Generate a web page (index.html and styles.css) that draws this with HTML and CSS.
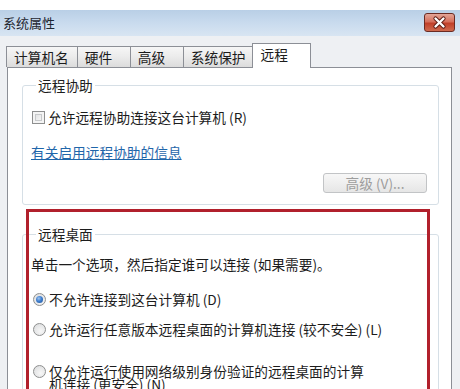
FILE: index.html
```html
<!DOCTYPE html>
<html lang="zh-CN">
<head>
<meta charset="utf-8">
<title>系统属性</title>
<link rel="stylesheet" href="styles.css">
</head>
<body>
<div class="window">
  <div class="topstrip"></div>
  <div class="titlebar">
    <span class="title">系统属性</span>
    <div class="close">
      <svg width="31" height="19" viewBox="0 0 31 19">
        <path d="M11.5 5.5 L19.5 13.5 M19.5 5.5 L11.5 13.5" stroke="#5a1a12" stroke-width="4.2" stroke-linecap="round"/>
        <path d="M11.5 5.5 L19.5 13.5 M19.5 5.5 L11.5 13.5" stroke="#ffffff" stroke-width="2.4" stroke-linecap="round"/>
      </svg>
    </div>
  </div>
  <div class="dialog">
    <div class="tabs">
      <div class="tab">计算机名</div>
      <div class="tab">硬件</div>
      <div class="tab">高级</div>
      <div class="tab">系统保护</div>
      <div class="tab active">远程</div>
    </div>
    <div class="panel">
      <fieldset class="group group-assist">
        <legend>远程协助</legend>
        <div class="option">
          <span class="checkbox"></span>
          <span class="option-text">允许远程协助连接这台计算机 (R)</span>
        </div>
        <a class="link">有关启用远程协助的信息</a>
        <div class="button-row"><span class="button">高级 (V)...</span></div>
      </fieldset>
      <fieldset class="group group-desktop">
        <legend>远程桌面</legend>
        <p class="desc">单击一个选项，然后指定谁可以连接 (如果需要)。</p>
        <div class="option radio-option first">
          <span class="radio checked"></span>
          <span class="option-text">不允许连接到这台计算机 (D)</span>
        </div>
        <div class="option radio-option">
          <span class="radio"></span>
          <span class="option-text">允许运行任意版本远程桌面的计算机连接 (较不安全) (L)</span>
        </div>
        <div class="option radio-option multi">
          <span class="radio"></span>
          <span class="option-text">仅允许运行使用网络级别身份验证的远程桌面的计算机连接 (更安全) (N)</span>
        </div>
      </fieldset>
    </div>
  </div>
  <div class="annotation"></div>
</div>
</body>
</html>
```
FILE: styles.css
```css
* { box-sizing: border-box; }
html, body { margin: 0; padding: 0; }
body {
  width: 460px;
  height: 389px;
  overflow: hidden;
  background: #eef0f3;
  font-family: "Noto Sans CJK SC", "Noto Sans", sans-serif;
  font-size: 13.7px;
  color: #1c1c1c;
}
.window {
  position: relative;
  width: 460px;
  height: 389px;
  overflow: hidden;
}
.topstrip {
  height: 10px;
  background: #ffffff;
}
.titlebar {
  height: 26px;
  background: linear-gradient(to bottom, #b9cfe6 0%, #c9dbee 50%, #d8e5f2 100%);
  display: flex;
  justify-content: space-between;
  align-items: flex-start;
  padding: 0 5px 0 3px;
}
.title {
  font-size: 13px;
  line-height: 26px;
  color: #1e2630;
}
.close {
  margin-top: 3px;
  width: 31px;
  height: 19px;
  border: 1px solid #6b2b23;
  border-radius: 3px;
  background: linear-gradient(to bottom, #e3a597 0%, #d6705d 45%, #c1402a 55%, #cf6a4f 100%);
  display: flex;
  align-items: center;
  justify-content: center;
  overflow: hidden;
}
.close svg { display: block; margin: -1px; }
.dialog {
  background: #eef0f3;
}
.tabs {
  display: flex;
  align-items: flex-end;
  padding: 7px 0 0 6px;
  height: 31px;
}
.tab {
  height: 21px;
  min-width: 54px;
  padding: 0 8px 0 7px;
  line-height: 20px;
  font-size: 13.7px;
  border: 1px solid #8c8f96;
  border-bottom: none;
  margin-right: -1px;
  background: linear-gradient(to bottom, #f6f6f6 0%, #ebebeb 50%, #dcdcdc 100%);
  color: #1c1c1c;
}
.tab.active {
  height: 25px;
  width: 59px;
  margin-left: -2px;
  margin-bottom: -1px;
  padding-left: 8px;
  background: #ffffff;
  position: relative;
  z-index: 1;
  line-height: 20px;
}
.panel {
  margin: 0 8px 0 7px;
  height: 340px;
  border: 1px solid #8c8f96;
  background: #ffffff;
  padding: 8px 12px 0 14px;
}
.group {
  margin: 0;
  border: 1px solid #d6dfe6;
  border-radius: 3px;
  padding: 0 11px 11px 8px;
  min-inline-size: 0;
  display: flex;
  flex-direction: column;
  align-items: flex-start;
}
.group legend {
  margin-left: 5px;
  padding: 0 2px;
  line-height: 18px;
  font-size: 13.7px;
  color: #1c1c1c;
}
.group-desktop {
  margin-top: 20px;
  padding-bottom: 40px;
}
.option {
  display: flex;
  align-items: flex-start;
  line-height: 18px;
  margin-top: 14px;
}
.checkbox {
  width: 13px;
  height: 13px;
  margin: 3px 3px 0 1px;
  border: 1px solid #8e8f8f;
  background: linear-gradient(135deg, #d9dadb 0%, #f0f0f0 60%, #fbfbfb 100%);
  box-shadow: inset 0 0 0 2px #f4f4f4, inset 0 0 0 3px #c7c9cb;
  flex: none;
}
.link {
  margin-top: 17px;
  line-height: 18px;
  color: #1f66aa;
  text-decoration: underline;
  cursor: pointer;
}
.button-row {
  align-self: stretch;
  display: flex;
  justify-content: flex-end;
  margin-top: 12px;
}
.button {
  width: 104px;
  height: 20px;
  border: 1px solid #c2c4c6;
  border-radius: 3px;
  background: linear-gradient(to bottom, #f7f7f7 0%, #efefef 50%, #e6e6e6 100%);
  color: #9d9d9d;
  text-align: center;
  line-height: 18px;
  font-size: 13.7px;
}
.desc {
  margin: 12px 0 0 0;
  line-height: 18px;
}
.radio-option { margin-top: 12px; }
.radio-option.first { margin-top: 17px; }
.radio-option.multi {
  margin-top: 27px;
  line-height: 13px;
}
.radio-option.multi .option-text { width: 320px; }
.radio {
  width: 13px;
  height: 13px;
  margin: 3px 3px 0 2px;
  border-radius: 50%;
  border: 1px solid #8e8f8f;
  background: radial-gradient(circle at 60% 65%, #f7f7f7 0%, #e2e3e4 70%, #cfd0d2 100%);
  flex: none;
  position: relative;
}
.radio-option.multi .radio { margin-top: 0; }
.radio.checked::after {
  content: "";
  position: absolute;
  left: 2px;
  top: 2px;
  width: 7px;
  height: 7px;
  border-radius: 50%;
  background: radial-gradient(circle at 40% 35%, #9fc4ef 0%, #3f7fcf 45%, #1c4f96 100%);
}
.annotation {
  position: absolute;
  left: 26px;
  top: 209px;
  width: 404px;
  height: 260px;
  border: 3px solid #b1202c;
}
```
